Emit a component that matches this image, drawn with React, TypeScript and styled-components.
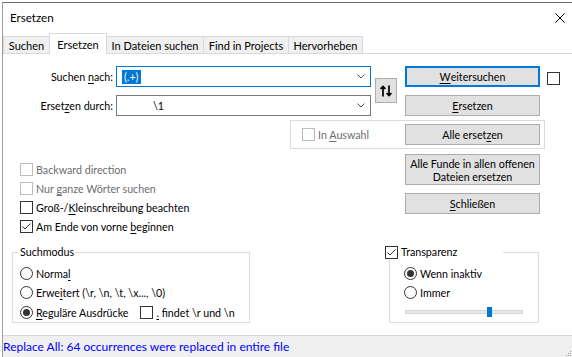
import styled, { createGlobalStyle } from 'styled-components';

const GlobalStyle = createGlobalStyle`
  html, body {
    margin: 0;
    padding: 0;
    background: #ffffff;
    overflow: hidden;
  }
  body {
    font-family: Lato, "Liberation Sans", sans-serif;
    font-size: 10.7px;
    color: #000;
  }
  * {
    box-sizing: border-box;
  }
`;

const Window = styled.div`
  margin: 2px 0 0 2px;
  width: 570px;
  height: 355px;
  border-top: 1px solid #6f6f6f;
  border-left: 1px solid #9d9d9d;
  background: #fff;
  display: flex;
  flex-direction: column;
`;

const TitleBar = styled.div`
  height: 30px;
  flex: none;
  display: flex;
  align-items: center;
  justify-content: space-between;
  padding: 0 7px;
`;

const Title = styled.span`
  font-size: 11.6px;
  line-height: 16px;
`;

const TabStrip = styled.div`
  height: 21px;
  flex: none;
  display: flex;
  align-items: flex-end;
  border-bottom: 1px solid #d9d9d9;
`;

const Tab = styled.div<{ $w: number; $active?: boolean }>`
  position: relative;
  z-index: ${(p) => (p.$active ? 1 : 0)};
  width: ${(p) => p.$w}px;
  height: ${(p) => (p.$active ? 21 : 17)}px;
  margin-left: -1px;
  margin-bottom: ${(p) => (p.$active ? -1 : 0)}px;
  border: 1px solid #d9d9d9;
  border-bottom: none;
  background: ${(p) => (p.$active ? '#ffffff' : '#f0f0f0')};
  display: flex;
  align-items: center;
  justify-content: center;
  white-space: nowrap;
  font-size: 11px;

  &:first-child {
    margin-left: 0;
  }
`;

const Content = styled.div`
  flex: 1;
  display: flex;
  flex-direction: column;
`;

const Mn = styled.u`
  text-decoration-thickness: 1px;
  text-underline-offset: 2px;
`;

/* top: fields, swap, first buttons */

const TopRow = styled.div`
  margin-top: 12px;
  display: flex;
  align-items: flex-start;
`;

const FieldGrid = styled.div`
  display: grid;
  grid-template-columns: 110px 255px;
  column-gap: 3px;
  row-gap: 8px;
`;

const FieldLabel = styled.label`
  height: 21px;
  line-height: 21px;
  text-align: right;
  white-space: nowrap;
`;

const Combo = styled.div<{ $focused?: boolean }>`
  height: 21px;
  border: 1px solid ${(p) => (p.$focused ? '#0078d7' : '#7a7a7a')};
  background: #fff;
  display: flex;
  align-items: center;
  justify-content: space-between;
  padding: 0 5px;
`;

const ComboText = styled.span<{ $indent?: number }>`
  padding-left: ${(p) => p.$indent ?? 0}px;
  white-space: pre;
`;

const Selection = styled.span`
  background: #0078d7;
  color: #fff;
  padding: 0 3px 0 2px;
  line-height: 14px;
  display: inline-block;
`;

const SwapButton = styled.button`
  margin: 12px 0 0 4px;
  width: 22px;
  height: 25px;
  padding: 0;
  border: 1px solid #adadad;
  background: #e1e1e1;
  display: flex;
  align-items: center;
  justify-content: center;
`;

const ButtonColumn = styled.div<{ $ml?: number }>`
  margin-left: ${(p) => p.$ml ?? 0}px;
  width: 135px;
  flex: none;
  display: flex;
  flex-direction: column;
  gap: 8px;
`;

const Button = styled.button<{ $default?: boolean; $tall?: boolean }>`
  width: 135px;
  height: ${(p) => (p.$tall ? 31 : 21)}px;
  flex: none;
  padding: 0;
  border: ${(p) => (p.$default ? '2px solid #0078d7' : '1px solid #adadad')};
  background: #e1e1e1;
  font: inherit;
  color: #000;
  line-height: 13px;
  text-align: center;
  white-space: nowrap;
  display: flex;
  align-items: center;
  justify-content: center;
`;

const AsideCheck = styled.div`
  margin: 6px 0 0 7px;
`;

/* selection group */

const SelectionGroup = styled.div`
  margin: 4px 0 0 287px;
  width: 255px;
  height: 29px;
  border: 1px solid #dcdcdc;
  display: flex;
  align-items: center;
  padding: 0 4px 0 11px;

  & > button {
    margin-left: auto;
  }
`;

/* checks and lower buttons */

const LowerRow = styled.div`
  margin-top: 5px;
  display: flex;
  align-items: flex-start;
`;

const CheckList = styled.div`
  margin: 6px 0 0 17px;
  width: 385px;
  flex: none;
  display: flex;
  flex-direction: column;
`;

const OptionRow = styled.div<{ $h?: number; $disabled?: boolean }>`
  height: ${(p) => p.$h ?? 19}px;
  display: flex;
  align-items: center;
  gap: 3px;
  white-space: pre;
  color: ${(p) => (p.$disabled ? '#6d6d6d' : '#000')};
`;

const Box = styled.span<{ $disabled?: boolean }>`
  width: 13px;
  height: 13px;
  flex: none;
  border: 1px solid ${(p) => (p.$disabled ? '#bcbcbc' : '#333333')};
  background: #fff;
  display: flex;
  align-items: center;
  justify-content: center;
`;

const RadioCircle = styled.span<{ $checked?: boolean }>`
  width: 13px;
  height: 13px;
  flex: none;
  border: 1px solid #333333;
  border-radius: 50%;
  background: #fff;
  display: flex;
  align-items: center;
  justify-content: center;

  &::after {
    content: '';
    width: 7px;
    height: 7px;
    border-radius: 50%;
    background: ${(p) => (p.$checked ? '#333333' : 'transparent')};
  }
`;

/* mode groups */

const ModesRow = styled.div`
  margin-top: 9px;
  display: flex;
  align-items: flex-start;
`;

const GroupBox = styled.fieldset<{ $w: number; $ml: number; $pl: number }>`
  margin: 0 0 0 ${(p) => p.$ml}px;
  width: ${(p) => p.$w}px;
  min-width: 0;
  padding: 4.5px 0 0 ${(p) => p.$pl}px;
  border: 1px solid #dcdcdc;
`;

const Legend = styled.legend<{ $ml: number; $w?: number }>`
  margin-left: ${(p) => p.$ml}px;
  ${(p) => (p.$w ? `width: ${p.$w}px;` : '')}
  height: 14px;
  line-height: 14px;
  padding: 0 1px 0 2px;
  background: #fff;
  display: flex;
  align-items: center;
  gap: 3px;
`;

const InlineCheck = styled.span`
  margin-left: 9px;
  display: flex;
  align-items: center;
  gap: 3px;
`;

const SliderRow = styled.div`
  height: 19.5px;
  display: flex;
  align-items: center;
  padding-left: 1px;
`;

const Track = styled.div`
  position: relative;
  width: 118px;
  height: 4px;
  background: #e7eaea;
  border: 1px solid #d6d6d6;
`;

const Thumb = styled.div`
  position: absolute;
  left: 81px;
  top: -4px;
  width: 5px;
  height: 10px;
  background: #0078d7;
`;

/* status */

const StatusBar = styled.div`
  height: 22px;
  flex: none;
  border-top: 1px solid #d7d7d7;
  background: #f0f0f0;
  color: #0000ff;
  font-size: 12px;
  display: flex;
  align-items: center;
  justify-content: space-between;
  white-space: nowrap;

  & > svg {
    align-self: flex-end;
  }
`;

function Check({ checked, disabled }: { checked?: boolean; disabled?: boolean }) {
  return (
    <Box $disabled={disabled}>
      {checked && (
        <svg width="11" height="11" viewBox="0 0 11 11">
          <path d="M1.5 5.5 4 8l5.5-5.5" fill="none" stroke="#333" strokeWidth="1" />
        </svg>
      )}
    </Box>
  );
}

function Chevron() {
  return (
    <svg width="8" height="5" viewBox="0 0 8 5">
      <path d="M0.5 0.5 4 4l3.5-3.5" fill="none" stroke="#555" strokeWidth="1" />
    </svg>
  );
}

function SwapIcon() {
  return (
    <svg width="12" height="12" viewBox="0 0 12 12">
      <path
        d="M3 11.5V1.5M0.6 3.9 3 1.5l2.4 2.4M9 0.5v10M6.6 8.1 9 10.5l2.4-2.4"
        fill="none"
        stroke="#000"
        strokeWidth="1.7"
      />
    </svg>
  );
}

function CloseIcon() {
  return (
    <svg width="10" height="10" viewBox="0 0 10 10">
      <path d="M0.5 0.5l9 9M9.5 0.5l-9 9" stroke="#000" strokeWidth="1" />
    </svg>
  );
}

function Grip() {
  const dots = [
    [5, 1],
    [3, 3],
    [5, 3],
    [1, 5],
    [3, 5],
    [5, 5],
  ];
  return (
    <svg width="7" height="7" viewBox="0 0 7 7">
      {dots.map(([x, y]) => (
        <rect key={`${x}-${y}`} x={x} y={y} width="1" height="1" fill="#a0a0a0" />
      ))}
    </svg>
  );
}

export default function App() {
  return (
    <>
      <GlobalStyle />
      <Window>
        <TitleBar>
          <Title>Ersetzen</Title>
          <CloseIcon />
        </TitleBar>
        <TabStrip>
          <Tab $w={47}>Suchen</Tab>
          <Tab $w={58} $active>
            Ersetzen
          </Tab>
          <Tab $w={98}>In Dateien suchen</Tab>
          <Tab $w={86}>Find in Projects</Tab>
          <Tab $w={75}>Hervorheben</Tab>
        </TabStrip>
        <Content>
          <TopRow>
            <FieldGrid>
              <FieldLabel>
                Suchen <Mn>n</Mn>ach:
              </FieldLabel>
              <Combo $focused>
                <ComboText>
                  <Selection>(.+)</Selection>
                </ComboText>
                <Chevron />
              </Combo>
              <FieldLabel>
                Erset<Mn>z</Mn>en durch:
              </FieldLabel>
              <Combo>
                <ComboText $indent={31}>{'\\1'}</ComboText>
                <Chevron />
              </Combo>
            </FieldGrid>
            <SwapButton>
              <SwapIcon />
            </SwapButton>
            <ButtonColumn $ml={8}>
              <Button $default>
                <Mn>W</Mn>eitersuchen
              </Button>
              <Button>
                <Mn>E</Mn>rsetzen
              </Button>
            </ButtonColumn>
            <AsideCheck>
              <Check />
            </AsideCheck>
          </TopRow>

          <SelectionGroup>
            <OptionRow $disabled>
              <Check disabled />
              <span>
                In <Mn>A</Mn>uswahl
              </span>
            </OptionRow>
            <Button>
              <span>
                Alle erset<Mn>z</Mn>en
              </span>
            </Button>
          </SelectionGroup>

          <LowerRow>
            <CheckList>
              <OptionRow $disabled>
                <Check disabled />
                Backward direction
              </OptionRow>
              <OptionRow $disabled>
                <Check disabled />
                <span>
                  Nur <Mn>g</Mn>anze Wörter suchen
                </span>
              </OptionRow>
              <OptionRow>
                <Check />
                <span>
                  Groß-/<Mn>K</Mn>leinschreibung beachten
                </span>
              </OptionRow>
              <OptionRow>
                <Check checked />
                <span>
                  Am Ende von vorne <Mn>b</Mn>eginnen
                </span>
              </OptionRow>
            </CheckList>
            <ButtonColumn>
              <Button $tall>
                <span>
                  Alle Funde in allen offenen
                  <br />
                  Dateien ersetzen
                </span>
              </Button>
              <Button>
                <span>
                  <Mn>S</Mn>chließen
                </span>
              </Button>
            </ButtonColumn>
          </LowerRow>

          <ModesRow>
            <GroupBox $w={238} $ml={9} $pl={7}>
              <Legend $ml={-2}>Suchmodus</Legend>
              <OptionRow $h={19.5}>
                <RadioCircle />
                <span>
                  Norma<Mn>l</Mn>
                </span>
              </OptionRow>
              <OptionRow $h={19.5}>
                <RadioCircle />
                <span>
                  Erwe<Mn>i</Mn>tert (\r, \n, \t, \x..., \0)
                </span>
              </OptionRow>
              <OptionRow $h={19.5}>
                <RadioCircle $checked />
                <span>
                  <Mn>R</Mn>eguläre Ausdrücke
                </span>
                <InlineCheck>
                  <Check />
                  <span>
                    <Mn>.</Mn> findet \r und \n
                  </span>
                </InlineCheck>
              </OptionRow>
            </GroupBox>
            <GroupBox $w={150} $ml={139} $pl={14}>
              <Legend $ml={-21} $w={120}>
                <Check checked />
                Transparenz
              </Legend>
              <OptionRow $h={19.5}>
                <RadioCircle $checked />
                Wenn inaktiv
              </OptionRow>
              <OptionRow $h={19.5}>
                <RadioCircle />
                Immer
              </OptionRow>
              <SliderRow>
                <Track>
                  <Thumb />
                </Track>
              </SliderRow>
            </GroupBox>
          </ModesRow>
        </Content>
        <StatusBar>
          <span>Replace All: 64 occurrences were replaced in entire file</span>
          <Grip />
        </StatusBar>
      </Window>
    </>
  );
}
